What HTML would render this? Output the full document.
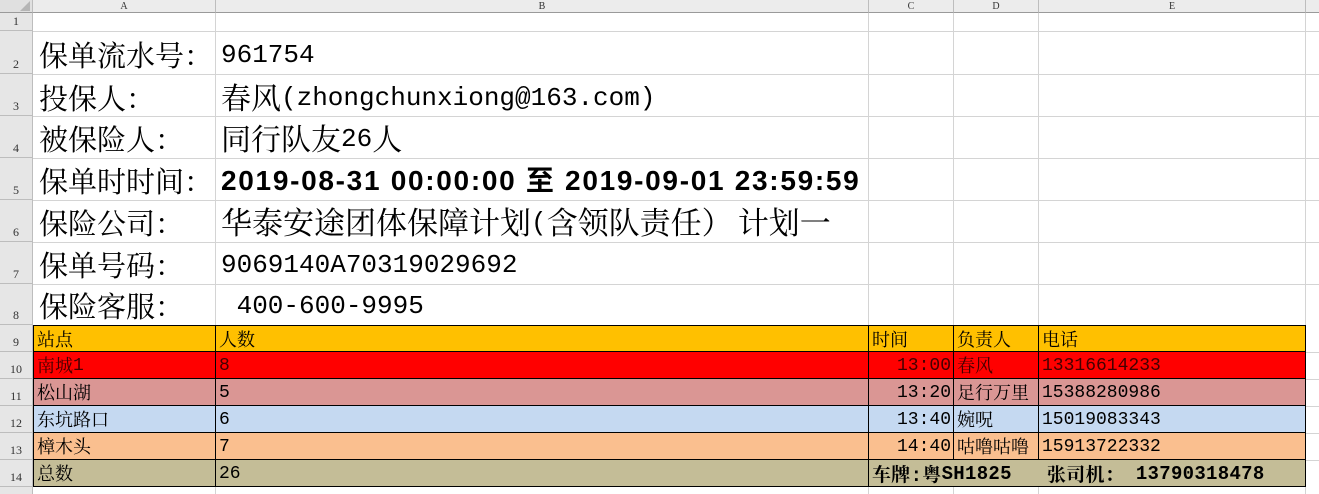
<!DOCTYPE html>
<html><head><meta charset="utf-8"><style>
body{margin:0;width:1319px;height:494px;background:#fff;position:relative;overflow:hidden;font-family:"Liberation Mono","Noto Serif CJK SC",monospace;}
.a{position:absolute;box-sizing:border-box;}
.gl{background:#d4d4d4;}
.rn{position:absolute;left:0;width:33px;text-align:center;font-size:12px;color:#333;font-family:"Liberation Serif",serif;box-sizing:border-box;border-bottom:1px solid #bdbdbd;border-right:1px solid #bdbdbd;background:#e6e6e6;display:flex;align-items:flex-end;justify-content:center;padding-bottom:1px;}
.ch{position:absolute;top:0;height:13px;font-size:10px;color:#333;text-align:center;line-height:13px;border-right:1px solid #bdbdbd;border-bottom:1px solid #9a9a9a;background:#ececec;box-sizing:border-box;font-family:"Liberation Serif",serif;}
.big{position:absolute;font-size:29px;line-height:32px;white-space:nowrap;color:#000;}
.big span{font-size:26px;position:relative;top:-4px;}
.cell{position:absolute;font-size:18px;line-height:20px;padding-top:6px;white-space:nowrap;padding-left:3px;box-sizing:border-box;border-right:1px solid #000;border-bottom:1px solid #000;overflow:hidden;}
.cell span{position:relative;top:-2px;}
</style></head><body>
<div class="a gl" style="left:215px;top:13px;width:1px;height:312px"></div>
<div class="a gl" style="left:868px;top:13px;width:1px;height:312px"></div>
<div class="a gl" style="left:953px;top:13px;width:1px;height:312px"></div>
<div class="a gl" style="left:1038px;top:13px;width:1px;height:312px"></div>
<div class="a gl" style="left:1305px;top:13px;width:1px;height:481px"></div>
<div class="a gl" style="left:33px;top:31px;width:1286px;height:1px"></div>
<div class="a gl" style="left:33px;top:74px;width:1286px;height:1px"></div>
<div class="a gl" style="left:33px;top:116px;width:1286px;height:1px"></div>
<div class="a gl" style="left:33px;top:158px;width:1286px;height:1px"></div>
<div class="a gl" style="left:33px;top:200px;width:1286px;height:1px"></div>
<div class="a gl" style="left:33px;top:242px;width:1286px;height:1px"></div>
<div class="a gl" style="left:33px;top:284px;width:1286px;height:1px"></div>
<div class="a gl" style="left:1305px;top:352px;width:14px;height:1px"></div>
<div class="a gl" style="left:1305px;top:379px;width:14px;height:1px"></div>
<div class="a gl" style="left:1305px;top:406px;width:14px;height:1px"></div>
<div class="a gl" style="left:1305px;top:433px;width:14px;height:1px"></div>
<div class="a gl" style="left:1305px;top:460px;width:14px;height:1px"></div>
<div class="a gl" style="left:215px;top:487px;width:1px;height:7px"></div>
<div class="a gl" style="left:868px;top:487px;width:1px;height:7px"></div>
<div class="a gl" style="left:953px;top:487px;width:1px;height:7px"></div>
<div class="a gl" style="left:1038px;top:487px;width:1px;height:7px"></div>
<div class="ch" style="left:0;width:33px;background:#e0e0e0"><svg width="10" height="10" style="position:absolute;right:2px;bottom:1px"><polygon points="10,0 10,10 0,10" fill="#b5b5b5"/></svg></div>
<div class="ch" style="left:33px;width:183px">A</div>
<div class="ch" style="left:216px;width:653px">B</div>
<div class="ch" style="left:869px;width:85px">C</div>
<div class="ch" style="left:954px;width:85px">D</div>
<div class="ch" style="left:1039px;width:267px">E</div>
<div class="ch" style="left:1306px;width:13px;border-right:0"></div>
<div class="rn" style="top:13px;height:18px">1</div>
<div class="rn" style="top:31px;height:43px">2</div>
<div class="rn" style="top:74px;height:42px">3</div>
<div class="rn" style="top:116px;height:42px">4</div>
<div class="rn" style="top:158px;height:42px">5</div>
<div class="rn" style="top:200px;height:42px">6</div>
<div class="rn" style="top:242px;height:42px">7</div>
<div class="rn" style="top:284px;height:41px">8</div>
<div class="rn" style="top:325px;height:27px">9</div>
<div class="rn" style="top:352px;height:27px">10</div>
<div class="rn" style="top:379px;height:27px">11</div>
<div class="rn" style="top:406px;height:27px">12</div>
<div class="rn" style="top:433px;height:27px">13</div>
<div class="rn" style="top:460px;height:27px">14</div>
<div class="rn" style="top:487px;height:7px;border-bottom:0"></div>

<div class="big" style="left:39px;top:43px">保单流水号：</div><div class="big" style="left:221px;top:43px"><span>961754</span></div>
<div class="big" style="left:39px;top:86px">投保人：</div><div class="big" style="left:221px;top:86px;font-size:30px">春风<span>(zhongchunxiong@163.com)</span></div>
<div class="big" style="left:39px;top:127px">被保险人：</div><div class="big" style="left:221px;top:127px;font-size:30px">同行队友<span>26</span>人</div>
<div class="big" style="left:39px;top:169px">保单时时间：</div><div class="big" style="left:221px;top:165px;font-family:'Liberation Sans','Noto Sans CJK SC',sans-serif;font-weight:bold;font-size:28px;letter-spacing:1.7px">2019-08-31 00:00:00 至 2019-09-01 23:59:59</div>
<div class="big" style="left:39px;top:211px">保险公司：</div><div class="big" style="left:221px;top:211px;font-size:31px">华泰安途团体保障计划<span>(</span>含领队责任）<span>&#8201;</span>计划一</div>
<div class="big" style="left:39px;top:253px">保单号码：</div><div class="big" style="left:221px;top:253px"><span>9069140A70319029692</span></div>
<div class="big" style="left:39px;top:294px">保险客服：</div><div class="big" style="left:221px;top:294px"><span>&nbsp;400-600-9995</span></div>

<div class="cell" style="left:33px;top:325px;width:183px;height:27px;background:#ffc000;border-top:1px solid #000;border-left:1px solid #000">站点</div>
<div class="cell" style="left:216px;top:325px;width:653px;height:27px;background:#ffc000;border-top:1px solid #000">人数</div>
<div class="cell" style="left:869px;top:325px;width:85px;height:27px;background:#ffc000;border-top:1px solid #000">时间</div>
<div class="cell" style="left:954px;top:325px;width:85px;height:27px;background:#ffc000;border-top:1px solid #000">负责人</div>
<div class="cell" style="left:1039px;top:325px;width:267px;height:27px;background:#ffc000;border-top:1px solid #000">电话</div>

<div class="cell" style="left:33px;top:352px;width:183px;height:27px;background:#ff0000;color:#400;border-left:1px solid #000">南城<span>1</span></div>
<div class="cell" style="left:216px;top:352px;width:653px;height:27px;background:#ff0000;color:#400"><span>8</span></div>
<div class="cell" style="left:869px;top:352px;width:85px;height:27px;background:#ff0000;color:#400;text-align:right;padding-right:2px"><span>13:00</span></div>
<div class="cell" style="left:954px;top:352px;width:85px;height:27px;background:#ff0000;color:#400">春风</div>
<div class="cell" style="left:1039px;top:352px;width:267px;height:27px;background:#ff0000;color:#400"><span>13316614233</span></div>

<div class="cell" style="left:33px;top:379px;width:183px;height:27px;background:#da9694;border-left:1px solid #000">松山湖</div>
<div class="cell" style="left:216px;top:379px;width:653px;height:27px;background:#da9694"><span>5</span></div>
<div class="cell" style="left:869px;top:379px;width:85px;height:27px;background:#da9694;text-align:right;padding-right:2px"><span>13:20</span></div>
<div class="cell" style="left:954px;top:379px;width:85px;height:27px;background:#da9694">足行万里</div>
<div class="cell" style="left:1039px;top:379px;width:267px;height:27px;background:#da9694"><span>15388280986</span></div>

<div class="cell" style="left:33px;top:406px;width:183px;height:27px;background:#c5d9f1;border-left:1px solid #000">东坑路口</div>
<div class="cell" style="left:216px;top:406px;width:653px;height:27px;background:#c5d9f1"><span>6</span></div>
<div class="cell" style="left:869px;top:406px;width:85px;height:27px;background:#c5d9f1;text-align:right;padding-right:2px"><span>13:40</span></div>
<div class="cell" style="left:954px;top:406px;width:85px;height:27px;background:#c5d9f1">婉呪</div>
<div class="cell" style="left:1039px;top:406px;width:267px;height:27px;background:#c5d9f1"><span>15019083343</span></div>

<div class="cell" style="left:33px;top:433px;width:183px;height:27px;background:#fabf8f;border-left:1px solid #000">樟木头</div>
<div class="cell" style="left:216px;top:433px;width:653px;height:27px;background:#fabf8f"><span>7</span></div>
<div class="cell" style="left:869px;top:433px;width:85px;height:27px;background:#fabf8f;text-align:right;padding-right:2px"><span>14:40</span></div>
<div class="cell" style="left:954px;top:433px;width:85px;height:27px;background:#fabf8f">咕噜咕噜</div>
<div class="cell" style="left:1039px;top:433px;width:267px;height:27px;background:#fabf8f"><span>15913722332</span></div>

<div class="cell" style="left:33px;top:460px;width:183px;height:27px;background:#c4bd97;border-left:1px solid #000">总数</div>
<div class="cell" style="left:216px;top:460px;width:653px;height:27px;background:#c4bd97"><span>26</span></div>
<div class="cell" style="left:869px;top:460px;width:437px;height:27px;background:#c4bd97;font-weight:bold;font-size:19px;letter-spacing:0.3px">车牌:粤<span>SH1825</span>&nbsp;&nbsp;&nbsp;张司机：<span>&nbsp;13790318478</span></div>
</body></html>
